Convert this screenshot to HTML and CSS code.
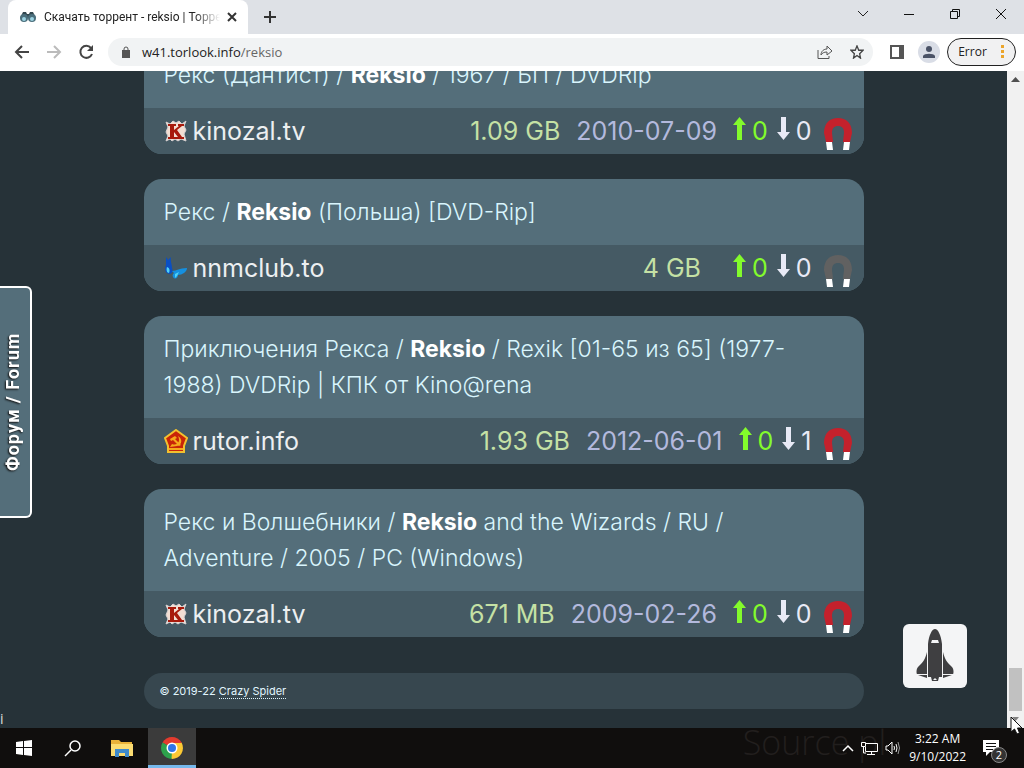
FILE: index.html
```
<!DOCTYPE html>
<html lang="ru">
  <head>
    <meta charset="utf-8">
    <title>Скачать торрент - reksio | Торрент</title>
    <link rel="stylesheet" href="styles.css">
  </head>
  <body>
    <!-- shared icons -->
    <svg class="defs" aria-hidden="true">
      <symbol id="up" viewBox="0 0 13 23"><path d="M6.500 0 L13 8 H9 V23 H4 V8 H0 Z" fill="currentColor"/></symbol>
      <symbol id="down" viewBox="0 0 13 23"><path d="M6.500 23 L13 15 H9 V0 H4 V15 H0 Z" fill="currentColor"/></symbol>
      <symbol id="magnet" viewBox="0 0 28 32">
        <path d="M2 24 L0 15 C0 5 6 0 14 0 S28 5 28 15 L26 24 H19 L20 15 C20 10 18 8 14 8 S8 10 8 15 L9 24 Z" fill="currentColor"/>
        <path d="M2 24 H8 L9 32 H3 Z M20 24 H26 L25 32 H19 Z" fill="#fff"/>
      </symbol>
      <symbol id="kinozal" viewBox="0 0 24 24">
        <path d="M2 3 L6 5 L9 2 L12 4 L15 2 L18 5 L22 2 L20 7 L22 11 L20 15 L22 22 L17 20 L14 22 L11 20 L8 22 L6 20 L2 22 L4 17 L2 13 L4 8 Z" fill="#f3ded3" stroke="#d8d2d2"/>
        <path d="M4 5 H12 V7 H10 V11 L15 7 H14 V5 H20 V7 H18 L13 11 L18 18 H20 V20 H12 V18 H14 L10 13 V18 H12 V20 H4 V18 H6 V7 H4 Z" fill="#a81a0c"/>
      </symbol>
      <symbol id="nnm" viewBox="0 0 24 24">
        <path d="M2 1 L4 4 L7 1 C6 5 8 8 8 12 C9 15 9 17 6 18 C2 18 0 14 2 9 Z" fill="#0a4fc4"/>
        <path d="M8 15 C13 15 15 12 23 12 C23 16 18 19 14 19 C14 22 11 24 9 21 C8 19 9 18 10 17 Z" fill="#1590e0"/>
        <path d="M3 11 C6 12 6 15 5 17 C3 17 2 14 3 11 Z M11 18 L15 16 L13 20 L11 22 Z" fill="#4fd2f5"/>
      </symbol>
      <symbol id="rutor" viewBox="0 0 24 24">
        <path d="M12 1 L23 9 L20 17 V23 H4 V17 L1 9 Z" fill="#c92408" stroke="#f3c12e" stroke-width="2"/>
        <path d="M6 10 L11 7 L13 9 L11 10 L17 16 L15 17 L9 11 L7 12 Z M14 7 C19 10 18 16 13 17 L6 18 L8 15 C13 17 17 13 14 7 Z M5 19 H19 V21 H5 Z" fill="#f6a91c"/>
      </symbol>
    </svg>

    <header class="browser">
      <div class="tabs">
        <div class="tab">
          <svg class="tab-icon" viewBox="0 0 16 12"><path d="M3 1 H6 L7 3 H9 L10 1 H13 L16 7 H0 Z" fill="#33474f"/><circle cx="4" cy="7" r="4" fill="#4b6f7c"/><circle cx="12" cy="7" r="4" fill="#4b6f7c"/><circle cx="4" cy="8" r="2" fill="#9cd3e2"/><circle cx="12" cy="8" r="2" fill="#9cd3e2"/></svg>
          <span class="tab-title">Скачать торрент - reksio | Торрент</span>
          <button class="tab-close" aria-label="Close tab"><svg width="10" height="10" viewBox="0 0 10 10"><path d="M1 1 L9 9 M9 1 L1 9" stroke="#333" stroke-width="2"/></svg></button>
        </div>
        <button class="new-tab" aria-label="New tab"><svg width="14" height="14" viewBox="0 0 14 14"><path d="M7 1 V13 M1 7 H13" stroke="#333" stroke-width="2"/></svg></button>
        <div class="window-buttons">
          <button aria-label="Search tabs"><svg width="12" height="12" viewBox="0 0 12 12"><path d="M1 3 L6 8 L11 3" fill="none" stroke="#222"/></svg></button>
          <button aria-label="Minimize"><svg width="12" height="12" viewBox="0 0 12 12"><path d="M1 6.500 H11" stroke="#111"/></svg></button>
          <button aria-label="Restore"><svg width="12" height="12" viewBox="0 0 12 12"><path d="M1.500 3.500 H8.500 V10.500 H1.500 Z M3.500 3.500 V1.500 H10.500 V8.500 H8.500" fill="none" stroke="#111"/></svg></button>
          <button aria-label="Close"><svg width="12" height="12" viewBox="0 0 12 12"><path d="M1 1 L11 11 M11 1 L1 11" stroke="#111"/></svg></button>
        </div>
      </div>
      <div class="toolbar">
        <button aria-label="Back"><svg width="16" height="16" viewBox="0 0 16 16"><path d="M15 8 H2 M8 2 L2 8 L8 14" fill="none" stroke="#444" stroke-width="2"/></svg></button>
        <button aria-label="Forward"><svg width="16" height="16" viewBox="0 0 16 16"><path d="M1 8 H14 M8 2 L14 8 L8 14" fill="none" stroke="#bbb" stroke-width="2"/></svg></button>
        <button aria-label="Reload"><svg width="16" height="16" viewBox="0 0 16 16"><path d="M13 4 A6 6 0 1 0 14 10" fill="none" stroke="#444" stroke-width="2"/><path d="M15 1 V7 H9 Z" fill="#444"/></svg></button>
        <div class="address">
          <svg width="10" height="12" viewBox="0 0 10 12"><path d="M1 4 H9 V12 H1 Z" fill="#555"/><path d="M3 5 V3 A2 2 0 0 1 7 3 V5" fill="none" stroke="#555"/></svg>
          <span class="url">w41.torlook.info<span class="path">/reksio</span></span>
          <button aria-label="Share"><svg width="16" height="16" viewBox="0 0 16 16"><path d="M1 6 V14.500 H12 V12 M4 11 C4 7 7 5 10 5 V2 L15 7 L10 11 V8 C7 8 5 9 4 11 Z" fill="none" stroke="#555"/></svg></button>
          <button aria-label="Bookmark"><svg width="14" height="14" viewBox="0 0 16 16"><path d="M8 1 L10 6 L15 6 L11 10 L12 15 L8 12 L4 15 L5 10 L1 6 L6 6 Z" fill="none" stroke="#444" stroke-width="1.500"/></svg></button>
        </div>
        <button class="panel-button" aria-label="Side panel"><svg width="14" height="14" viewBox="0 0 14 14"><path d="M1 1 H13 V13 H1 Z" fill="#fff" stroke="#555" stroke-width="2"/><path d="M9 1 H13 V13 H9 Z" fill="#555"/></svg></button>
        <button class="profile" aria-label="Profile"><svg width="14" height="14" viewBox="0 0 14 14"><circle cx="7" cy="4" r="3" fill="#4a5266"/><path d="M1 13 V11 C2 8 12 8 13 11 V13 Z" fill="#4a5266"/></svg></button>
        <button class="error">Error <svg width="4" height="14" viewBox="0 0 4 14"><path d="M0 0 H3 V3 H0 Z M0 5 H3 V8 H0 Z M0 10 H3 V13 H0 Z" fill="#eba52b"/></svg></button>
      </div>
    </header>

    <div class="viewport">
      <main class="page">
        <div class="card">
          <h3>Рекс (Дантист) / <b>Reksio</b> / 1967 / БП / DVDRip</h3>
          <div class="info">
            <svg class="favicon"><use href="#kinozal"/></svg>
            <a class="site" href="#">kinozal.tv</a>
            <span class="size">1.09 GB</span>
            <span class="date">2010-07-09</span>
            <span class="peers"><span class="seeds"><svg><use href="#up"/></svg>0</span><span class="leeches"><svg><use href="#down"/></svg>0</span></span>
            <a class="magnet" href="#" aria-label="Magnet"><svg><use href="#magnet"/></svg></a>
          </div>
        </div>
        <div class="card">
          <h3>Рекс / <b>Reksio</b> (Польша) [DVD-Rip]</h3>
          <div class="info">
            <svg class="favicon"><use href="#nnm"/></svg>
            <a class="site" href="#">nnmclub.to</a>
            <span class="size">4 GB</span>
            <span class="date"></span>
            <span class="peers"><span class="seeds"><svg><use href="#up"/></svg>0</span><span class="leeches"><svg><use href="#down"/></svg>0</span></span>
            <a class="magnet off" href="#" aria-label="Magnet"><svg><use href="#magnet"/></svg></a>
          </div>
        </div>
        <div class="card">
          <h3>Приключения Рекса / <b>Reksio</b> / Rexik [01-65 из 65] (1977-1988) DVDRip | КПК от Kino@rena</h3>
          <div class="info">
            <svg class="favicon"><use href="#rutor"/></svg>
            <a class="site" href="#">rutor.info</a>
            <span class="size">1.93 GB</span>
            <span class="date">2012-06-01</span>
            <span class="peers"><span class="seeds"><svg><use href="#up"/></svg>0</span><span class="leeches"><svg><use href="#down"/></svg>1</span></span>
            <a class="magnet" href="#" aria-label="Magnet"><svg><use href="#magnet"/></svg></a>
          </div>
        </div>
        <div class="card">
          <h3>Рекс и Волшебники / <b>Reksio</b> and the Wizards / RU / Adventure / 2005 / PC (Windows)</h3>
          <div class="info">
            <svg class="favicon"><use href="#kinozal"/></svg>
            <a class="site" href="#">kinozal.tv</a>
            <span class="size">671 MB</span>
            <span class="date">2009-02-26</span>
            <span class="peers"><span class="seeds"><svg><use href="#up"/></svg>0</span><span class="leeches"><svg><use href="#down"/></svg>0</span></span>
            <a class="magnet" href="#" aria-label="Magnet"><svg><use href="#magnet"/></svg></a>
          </div>
        </div>
        <footer class="copyright">© 2019-22 <a href="#">Crazy Spider</a></footer>
      </main>

      <a class="forum" href="#">Форум / Forum</a>
      <span class="corner">i</span>
      <button class="to-top" aria-label="Up">
        <svg width="38" height="54" viewBox="0 0 38 54">
          <path d="M12 15 C13 6 16 0 19 0 S25 6 26 15 V48 H23 L22 52 H16 L15 48 H12 Z" fill="#3f3f41"/>
          <path d="M11 23 V49 L2 46 C0 46 0 40 2 38 C7 33 9 31 11 23 Z M27 23 V49 L36 46 C38 46 38 40 36 38 C31 33 29 31 27 23 Z" fill="#3f3f41"/>
          <path d="M16 11 H22 L23 14 H15 Z M1 45 H11 V46 H1 Z M27 45 H37 V46 H27 Z M17 51 L19 49 L21 51 Z" fill="#f4f5f6"/>
        </svg>
      </button>

      <div class="scrollbar">
        <svg width="17" height="17" viewBox="0 0 17 17"><path d="M4 11 L8.500 6 L13 11 Z" fill="#505050"/></svg>
        <div class="thumb"></div>
        <svg width="17" height="17" viewBox="0 0 17 17"><path d="M5 6 L8.500 10 L12 6 Z" fill="#808080"/></svg>
      </div>
    </div>

    <footer class="taskbar">
      <button aria-label="Start"><svg width="16" height="16" viewBox="0 0 16 16"><path d="M0 2 L7 1 V7 H0 Z M8 1 L16 0 V7 H8 Z M0 8 H7 V15 L0 14 Z M8 8 H16 V16 L8 15 Z" fill="#fff"/></svg></button>
      <button aria-label="Search"><svg width="17" height="17" viewBox="0 0 17 17"><circle cx="11" cy="6" r="5" fill="none" stroke="#fff" stroke-width="1.500"/><path d="M7 10 L1 16" stroke="#fff" stroke-width="1.500"/></svg></button>
      <button class="pinned" aria-label="Explorer"><svg width="22" height="19" viewBox="0 0 22 19"><path d="M0 1 H8 L10 3 H21 V17 H0 Z" fill="#e9b23a"/><path d="M0 5 H22 V17 H0 Z" fill="#fbdc72"/><path d="M4 10 H18 V18 H14 V14 H8 V18 H4 Z" fill="#3f8acb"/></svg></button>
      <button class="pinned active" aria-label="Chrome">
        <svg width="22" height="22" viewBox="0 0 22 22">
          <path d="M11 11 L1.500 5.500 A11 11 0 0 1 20.500 5.500 Z" fill="#e33b2e"/>
          <path d="M11 11 L20.500 5.500 A11 11 0 0 1 11 22 Z" fill="#fcc934"/>
          <path d="M11 11 L11 22 A11 11 0 0 1 1.500 5.500 Z" fill="#2da14c"/>
          <path d="M11 6 H20.800 L15 13 Z" fill="#fcc934"/><path d="M15.300 13.500 L10.500 22 L11 14 Z" fill="#fcc934"/>
          <path d="M11 6 H20.700 L18 3 H7 Z" fill="#e33b2e"/>
          <circle cx="11" cy="11" r="5.500" fill="#fff"/><circle cx="11" cy="11" r="4" fill="#2f75e8"/>
        </svg>
      </button>
      <span class="wallpaper">Source pl</span>
      <div class="tray">
        <svg width="12" height="8" viewBox="0 0 12 8"><path d="M1 7 L6 2 L11 7" fill="none" stroke="#fff" stroke-width="1.500"/></svg>
        <svg width="17" height="15" viewBox="0 0 17 15"><path d="M5 2.500 H16.500 V10.500 H4.500 V6 M10.500 10 V13 M6 13.500 H14 M.500 1.500 H4.500 V5.500 H.500 Z M2.500 6 V12 H5" fill="none" stroke="#fff"/></svg>
        <svg width="16" height="14" viewBox="0 0 16 14"><path d="M1 5 H3 L7 1 V13 L3 9 H1 Z M9 5 Q10 7 9 9 M11 3 Q13 7 11 11" fill="none" stroke="#fff"/><path d="M13 1 Q16 7 13 13" fill="none" stroke="#999"/></svg>
      </div>
      <div class="clock"><time>3:22 AM</time><time>9/10/2022</time></div>
      <button class="notices" aria-label="Notifications">
        <svg width="16" height="16" viewBox="0 0 16 16"><path d="M0 0 H16 V12 H7 L3 16 V12 H0 Z" fill="#fff"/><path d="M3 3.500 H13 M3 6.500 H13 M3 9.500 H10" stroke="#111"/></svg>
        <span class="badge">2</span>
      </button>
    </footer>
    <svg class="cursor" viewBox="0 0 14 20"><path d="M1 1 V16 L4.500 13 L7 18 L9.500 17 L7.500 12 H12 Z" fill="#fff" stroke="#111"/></svg>
  </body>
</html>
```
FILE: styles.css
```
* {
  box-sizing: border-box;
}

body {
  margin: 0;
  height: 100vh;
  display: flex;
  flex-direction: column;
  overflow: hidden;
  font-family: "Open Sans", "Noto Sans", sans-serif;
  font-size: 12px;
  color: #222;
}

button {
  padding: 0;
  border: none;
  background: none;
  display: flex;
  align-items: center;
  justify-content: center;
  font: inherit;
  color: inherit;
}

.defs {
  display: none;
}

/* browser window */
.tabs {
  display: flex;
  height: 34px;
  background: #dee1e6;
}

.tab {
  display: flex;
  align-items: center;
  width: 240px;
  margin-left: 8px;
  padding: 0 8px 0 12px;
  background: #fff;
  border-radius: 8px 8px 0 0;
}

.tab-icon {
  flex: none;
  width: 16px;
  height: 12px;
  margin-right: 8px;
}

.tab-title {
  flex: 1;
  overflow: hidden;
  white-space: nowrap;
  font-family: Roboto, sans-serif;
  mask-image: linear-gradient(to right, #000 85%, transparent);
}

.tab-close {
  width: 16px;
  height: 16px;
  margin-left: 4px;
}

.new-tab {
  width: 44px;
}

.window-buttons {
  display: flex;
  margin-left: auto;
  padding-bottom: 6px;
}

.window-buttons button {
  width: 46px;
}

.toolbar {
  display: flex;
  align-items: center;
  height: 37px;
  padding: 0 8px 2px 6px;
  background: #fff;
}

.toolbar > button {
  width: 32px;
  height: 28px;
}

.address {
  flex: 1;
  display: flex;
  align-items: center;
  height: 28px;
  margin-left: 6px;
  padding: 0 0 0 13px;
  border-radius: 14px;
  background: #f1f3f4;
}

.address button {
  width: 32px;
}

.url {
  flex: 1;
  margin-left: 11px;
  font-size: 13px;
}

.path {
  color: #666;
}

.toolbar .panel-button {
  margin-left: 8px;
}

.toolbar .profile {
  width: 22px;
  height: 22px;
  margin: 0 7px 0 5px;
  border-radius: 50%;
  background: #d9dde6;
}

.toolbar .error {
  width: 69px;
  gap: 14px;
  border: 1px solid #222;
  border-radius: 14px;
  background: #f1f1f2;
}

/* search results */
.viewport {
  position: relative;
  flex: 1;
  min-height: 0;
  display: flex;
  background: #263238;
}

.page {
  flex: 1;
  min-width: 0;
  display: flex;
  flex-direction: column;
  align-items: center;
  justify-content: flex-end;
  gap: 25px;
  padding-bottom: 19px;
  overflow: hidden;
  font-family: Inter, "Open Sans", sans-serif;
}

.card {
  flex: none;
  width: 100%;
  max-width: 720px;
  border-radius: 18px;
  overflow: hidden;
  background: #546e7a;
}

.card h3 {
  margin: 0;
  padding: 15px 40px 15px 20px;
  font-size: 23px;
  font-weight: 300;
  line-height: 36px;
  color: #d9f5fd;
}

.card b {
  font-weight: 700;
  color: #fff;
}

.info {
  display: flex;
  align-items: center;
  height: 46px;
  padding: 0 12px 0 20px;
  background: #455a64;
  font-size: 25px;
  line-height: 36px;
  white-space: nowrap;
}

.favicon {
  width: 24px;
  height: 24px;
  margin-right: 5px;
}

.site {
  color: #eceff1;
  text-decoration: none;
}

.size {
  margin-left: auto;
  color: #c5e1a5;
}

.date {
  margin: 0 16px;
  color: #b3b9dd;
}

.peers {
  display: flex;
  gap: 9px;
}

.seeds,
.leeches {
  display: flex;
  align-items: center;
  gap: 6px;
}

.seeds {
  color: #83fb2c;
}

.leeches {
  color: #e8eaf6;
}

.peers svg {
  width: 13px;
  height: 23px;
  margin-bottom: 6px;
}

.magnet {
  margin-left: 12px;
  padding-top: 5px;
  line-height: 0;
  color: #c4212c;
}

.magnet.off {
  color: #616161;
}

.magnet svg {
  width: 28px;
  height: 32px;
}

.copyright {
  flex: none;
  width: 100%;
  max-width: 720px;
  margin-top: 11px;
  padding: 0 16px;
  border-radius: 18px;
  background: #37474f;
  font-size: 11px;
  line-height: 36px;
  color: #e1f5fe;
}

.copyright a {
  color: inherit;
  text-decoration: none;
  border-bottom: 1px dotted;
}

/* turned by 180deg, so the open side is the right one */
.forum {
  position: absolute;
  left: 0;
  top: 215px;
  width: 32px;
  height: 232px;
  border: 2px solid #fff;
  border-right: none;
  border-radius: 6px 0 0 6px;
  background: #546e7a;
  writing-mode: vertical-rl;
  transform: rotate(180deg);
  text-align: center;
  text-decoration: none;
  font-family: Roboto, sans-serif;
  font-size: 18px;
  font-weight: 700;
  line-height: 26px;
  letter-spacing: 1px;
  color: #fff;
  text-shadow: -1px -1px 2px #111;
}

.corner {
  position: absolute;
  left: 0;
  bottom: 0;
  font-size: 14px;
  color: #ddd;
}

.to-top {
  position: absolute;
  right: 57px;
  bottom: 40px;
  width: 64px;
  height: 64px;
  border-radius: 6px;
  background: #f4f5f6;
}

.scrollbar {
  width: 17px;
  display: flex;
  flex-direction: column;
  align-items: center;
  justify-content: space-between;
  background: #f1f1f1;
}

.thumb {
  width: 13px;
  height: 43px;
  margin-top: auto;
  background: #c1c1c1;
}

/* windows taskbar */
.taskbar {
  display: flex;
  flex: none;
  height: 40px;
  background: #100e0d;
  color: #fff;
}

.taskbar button {
  flex: none;
  width: 48px;
}

.taskbar .pinned {
  margin-left: 2px;
}

.taskbar .active {
  border-bottom: 3px solid #76b9ed;
  padding-top: 3px;
  background: #3b3b3b;
}

.wallpaper {
  flex: 1;
  text-align: right;
  font-size: 34px;
  font-weight: 300;
  line-height: 28px;
  color: #221f1e;
}

.tray {
  display: flex;
  align-items: center;
  gap: 7px;
  margin: 0 8px 0 -44px;
}

.clock {
  display: flex;
  flex-direction: column;
  justify-content: center;
  align-items: center;
  line-height: 18px;
}

.taskbar .notices {
  position: relative;
  width: 50px;
  margin-right: 8px;
}

.badge {
  position: absolute;
  right: 9px;
  bottom: 5px;
  width: 16px;
  height: 16px;
  border-radius: 50%;
  border: 1px solid #888;
  background: #333;
  font-size: 11px;
  line-height: 14px;
}

.cursor {
  position: absolute;
  right: 0;
  bottom: 32px;
  width: 14px;
  height: 20px;
}
```
